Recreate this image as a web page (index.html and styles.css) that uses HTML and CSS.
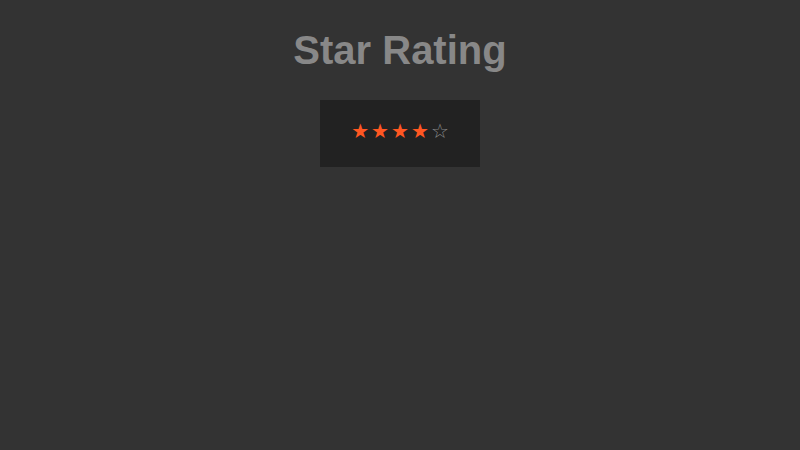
FILE: index.html
```html
<!DOCTYPE html>
<html>
<head>
<meta charset="utf-8">
<link rel="stylesheet" href="styles.css">
</head>
<body>
<main class="page">
  <h1 class="title">Star Rating</h1>
  <div class="rating">
    <span class="star on">★</span><span class="star on">★</span><span class="star on">★</span><span class="star on">★</span><span class="star off">☆</span>
  </div>
</main>
</body>
</html>
```
FILE: styles.css
```css
html, body {
  margin: 0;
  padding: 0;
  background: #333333;
  height: 100%;
}
.page {
  display: flex;
  flex-direction: column;
  align-items: center;
  font-family: "Liberation Sans", Arial, sans-serif;
}
.title {
  margin: 27px 0 27px;
  font-size: 40px;
  line-height: 46px;
  font-weight: bold;
  color: #888888;
}
.rating {
  width: 160px;
  height: 67px;
  box-sizing: border-box;
  padding-bottom: 5px;
  background: #222222;
  display: flex;
  align-items: center;
  justify-content: center;
  gap: 2px;
  font-size: 20px;
}
.star {
  font-family: "DejaVu Sans", sans-serif;
  line-height: 1;
}
.star.on {
  color: #ff5722;
}
.star.off {
  color: #888888;
}
```
